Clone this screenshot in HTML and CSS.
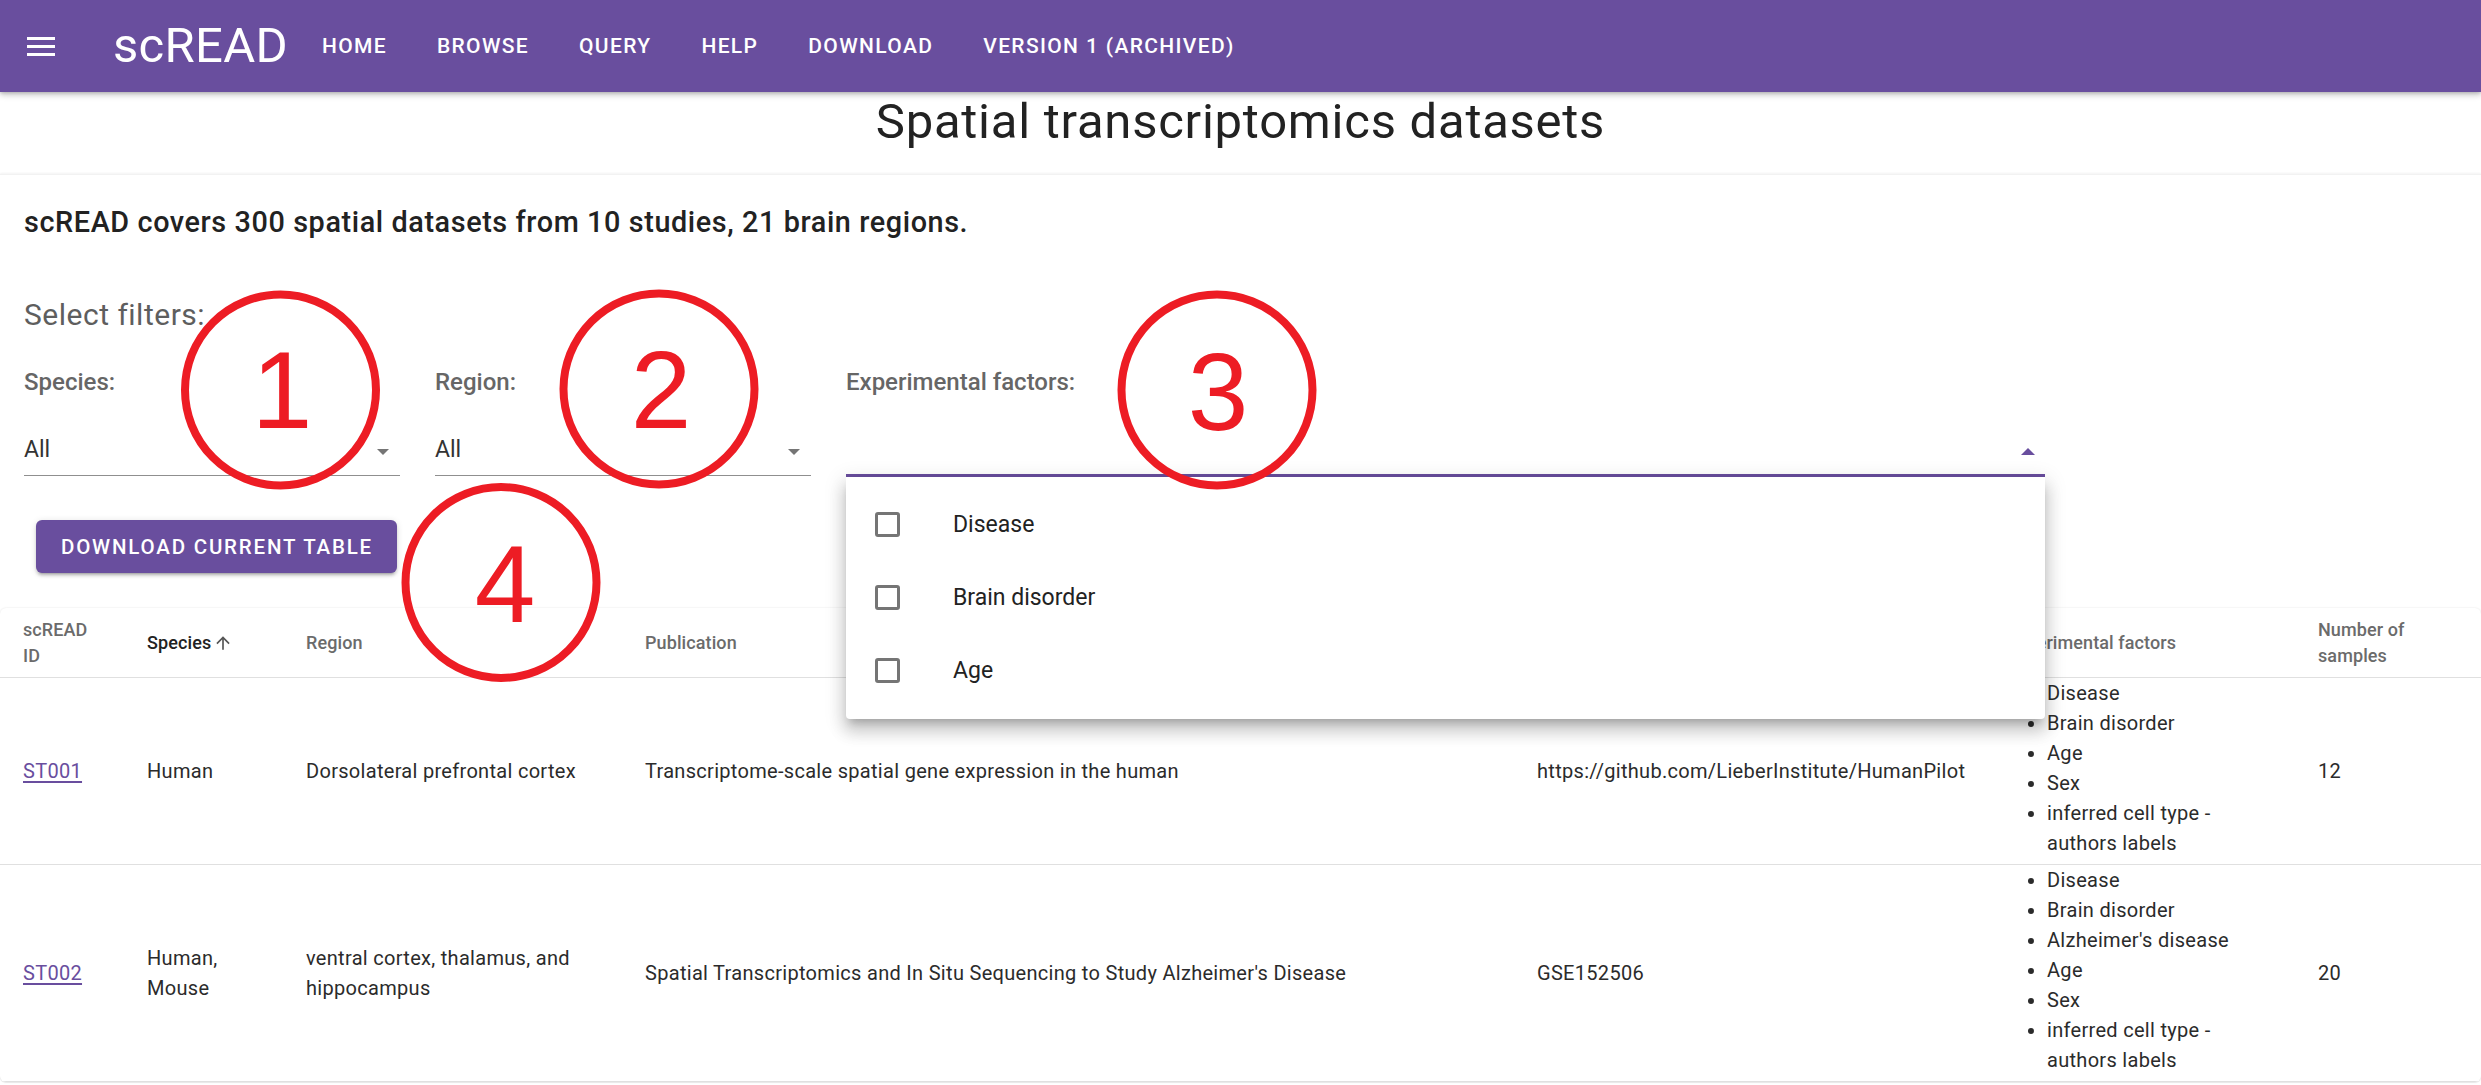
FILE: index.html
```html
<!DOCTYPE html>
<html lang="en">
<head>
<meta charset="utf-8">
<title>scREAD - Spatial transcriptomics datasets</title>
<link rel="stylesheet" href="styles.css">
</head>
<body>
<header class="appbar">
  <div class="menu-icon"><span></span><span></span><span></span></div>
  <div class="logo">scREAD</div>
  <nav class="nav">
    <a class="nav-link">HOME</a>
    <a class="nav-link">BROWSE</a>
    <a class="nav-link">QUERY</a>
    <a class="nav-link">HELP</a>
    <a class="nav-link">DOWNLOAD</a>
    <a class="nav-link">VERSION 1 (ARCHIVED)</a>
  </nav>
</header>

<div class="title-bar">
  <h1 class="page-title">Spatial transcriptomics datasets</h1>
</div>

<main class="sheet">
  <p class="summary">scREAD covers 300 spatial datasets from 10 studies, 21 brain regions.</p>
  <p class="filters-title">Select filters:</p>

  <div class="filters">
    <div class="field field-small">
      <div class="field-label">Species:</div>
      <div class="select">
        <span class="select-value">All</span>
        <span class="caret"></span>
      </div>
    </div>
    <div class="field field-small">
      <div class="field-label">Region:</div>
      <div class="select">
        <span class="select-value">All</span>
        <span class="caret"></span>
      </div>
    </div>
    <div class="field field-wide">
      <div class="field-label">Experimental factors:</div>
      <div class="select select-focused">
        <span class="select-value"></span>
        <span class="caret caret-up"></span>
        <ul class="menu">
          <li class="menu-item"><span class="checkbox"></span><span class="menu-text">Disease</span></li>
          <li class="menu-item"><span class="checkbox"></span><span class="menu-text">Brain disorder</span></li>
          <li class="menu-item"><span class="checkbox"></span><span class="menu-text">Age</span></li>
        </ul>
      </div>
    </div>
  </div>

  <button class="download">DOWNLOAD CURRENT TABLE</button>

  <div class="table-paper">
    <table class="data-table">
      <colgroup>
        <col class="c-id"><col class="c-species"><col class="c-region"><col class="c-pub"><col class="c-code"><col class="c-factors"><col class="c-num">
      </colgroup>
      <thead>
        <tr>
          <th>scREAD ID</th>
          <th class="sorted">Species<svg class="sort-icon" viewBox="0 0 24 24" width="20" height="20"><path d="M4 12l1.41 1.41L11 7.83V20h2V7.83l5.58 5.59L20 12l-8-8-8 8z"/></svg></th>
          <th>Region</th>
          <th>Publication</th>
          <th>Data availability</th>
          <th>Experimental factors</th>
          <th>Number of samples</th>
        </tr>
      </thead>
      <tbody>
        <tr>
          <td><a class="id-link">ST001</a></td>
          <td>Human</td>
          <td>Dorsolateral prefrontal cortex</td>
          <td>Transcriptome-scale spatial gene expression in the human</td>
          <td>https://github.com/LieberInstitute/HumanPilot</td>
          <td class="factors">
            <ul>
              <li>Disease</li>
              <li>Brain disorder</li>
              <li>Age</li>
              <li>Sex</li>
              <li>inferred cell type - authors labels</li>
            </ul>
          </td>
          <td>12</td>
        </tr>
        <tr>
          <td><a class="id-link">ST002</a></td>
          <td>Human, Mouse</td>
          <td>ventral cortex, thalamus, and hippocampus</td>
          <td>Spatial Transcriptomics and In Situ Sequencing to Study Alzheimer's Disease</td>
          <td>GSE152506</td>
          <td class="factors">
            <ul>
              <li>Disease</li>
              <li>Brain disorder</li>
              <li>Alzheimer's disease</li>
              <li>Age</li>
              <li>Sex</li>
              <li>inferred cell type - authors labels</li>
            </ul>
          </td>
          <td>20</td>
        </tr>
      </tbody>
    </table>
  </div>
</main>

<svg class="annotations" width="2481" height="1085" viewBox="0 0 2481 1085">
  <g class="ring">
    <circle cx="280.5" cy="390" r="95.5"/>
    <circle cx="659" cy="389" r="95.5"/>
    <circle cx="1217" cy="390" r="95.5"/>
    <circle cx="501" cy="582.5" r="95.5"/>
  </g>
  <g class="num">
    <text x="282" y="428">1</text>
    <text x="661" y="428">2</text>
    <text x="1218" y="430">3</text>
    <text x="505" y="622">4</text>
  </g>
</svg>
</body>
</html>
```

FILE: styles.css
```css
html, body {
  margin: 0;
  padding: 0;
}

body {
  position: relative;
  width: 2481px;
  height: 1085px;
  overflow: hidden;
  background: #ffffff;
  font-family: Roboto, "Noto Sans", "Liberation Sans", Arial, sans-serif;
  color: rgba(0, 0, 0, 0.87);
}

/* ---------- App bar ---------- */
.appbar {
  position: relative;
  z-index: 2;
  display: flex;
  align-items: center;
  height: 92px;
  background: #694e9e;
  color: #ffffff;
  box-shadow: 0 3px 6px rgba(0, 0, 0, 0.22), 0 1px 3px rgba(0, 0, 0, 0.14);
}

.menu-icon {
  display: flex;
  flex-direction: column;
  justify-content: space-between;
  width: 28px;
  height: 19px;
  margin-left: 27px;
}

.menu-icon span {
  display: block;
  height: 3px;
  background: #ffffff;
}

.logo {
  margin-left: 58px;
  font-size: 49px;
  font-weight: 400;
  line-height: 60px;
  letter-spacing: 0.3px;
}

.nav {
  display: flex;
  gap: 50px;
  margin-left: 34px;
}

.nav-link {
  font-size: 21px;
  font-weight: 500;
  letter-spacing: 1.35px;
  line-height: 30px;
  color: #ffffff;
}

/* ---------- Title ---------- */
.title-bar {
  padding-bottom: 23px;
}

.page-title {
  margin: 0;
  text-align: center;
  font-size: 49px;
  font-weight: 400;
  line-height: 59px;
  letter-spacing: 0.75px;
  color: #222222;
}

/* ---------- Sheet ---------- */
.sheet {
  position: relative;
  height: 911px;
  box-sizing: border-box;
  overflow: hidden;
  padding: 28px 0 0 24px;
  border-top: 1px solid #f2f2f2;
  box-shadow: 0 -1px 2px rgba(0, 0, 0, 0.05);
}

.summary {
  margin: -1px 0 0;
  font-size: 28.8px;
  font-weight: 500;
  line-height: 40px;
  letter-spacing: 0.6px;
  color: #222222;
}

.filters-title {
  margin: 53px 0 0;
  font-size: 30px;
  font-weight: 400;
  line-height: 40px;
  letter-spacing: 0.5px;
  color: #5e5e5e;
}

.filters {
  display: flex;
  gap: 35px;
  margin-top: 32px;
}

.field-small {
  width: 376px;
}

.field-wide {
  width: 1199px;
}

.field-label {
  font-size: 24px;
  font-weight: 500;
  line-height: 30px;
  color: #666666;
}

.select {
  position: relative;
  display: flex;
  align-items: flex-start;
  margin-top: 38px;
  height: 41px;
  box-sizing: border-box;
  border-bottom: 1px solid #8f8f8f;
}

.select-focused {
  height: 42px;
  border-bottom: 3px solid #694e9e;
}

.select-value {
  flex: 1;
  font-size: 23px;
  line-height: 30px;
  color: #333333;
}

.caret {
  width: 0;
  height: 0;
  margin-top: 14px;
  margin-right: 11px;
  border-left: 6px solid transparent;
  border-right: 6px solid transparent;
  border-top: 6px solid #757575;
}

.caret-up {
  margin-top: 13px;
  margin-right: 10px;
  border-left-width: 7px;
  border-right-width: 7px;
  border-top: 0;
  border-bottom: 7px solid #694e9e;
}

/* ---------- Dropdown menu ---------- */
.menu {
  position: absolute;
  z-index: 5;
  top: 100%;
  left: 0;
  right: 0;
  margin: 3px 0 0;
  padding: 11px 0 12px;
  list-style: none;
  background: #ffffff;
  border-radius: 0 0 4px 4px;
  box-shadow: 0 7px 8px -4px rgba(0, 0, 0, 0.2), 0 12px 16px 2px rgba(0, 0, 0, 0.14), 0 5px 20px 4px rgba(0, 0, 0, 0.1);
}

.menu-item {
  display: flex;
  align-items: center;
  height: 73px;
  padding-left: 29px;
}

.checkbox {
  width: 25px;
  height: 25px;
  box-sizing: border-box;
  border: 3px solid #757575;
  border-radius: 3px;
}

.menu-text {
  margin-left: 53px;
  font-size: 23px;
  line-height: 30px;
  color: #222222;
}

/* ---------- Button ---------- */
.download {
  display: block;
  margin: 43px 0 0 12px;
  height: 53px;
  padding: 0 24px 0 25px;
  border: 0;
  border-radius: 6px;
  background: #694e9e;
  color: #ffffff;
  font-family: Roboto, "Noto Sans", sans-serif;
  font-size: 20.5px;
  font-weight: 500;
  letter-spacing: 1.8px;
  box-shadow: 0 4px 2px -3px rgba(0, 0, 0, 0.2), 0 3px 3px 0 rgba(0, 0, 0, 0.14), 0 1px 7px 0 rgba(0, 0, 0, 0.12);
}

/* ---------- Table ---------- */
.table-paper {
  margin: 35px 0 0 -24px;
  width: 2481px;
  border-radius: 6px;
  box-shadow: 0 0 2px rgba(0, 0, 0, 0.12), 0 1px 1px rgba(0, 0, 0, 0.06);
  overflow: hidden;
}

.data-table {
  width: 2481px;
  table-layout: fixed;
  border-collapse: collapse;
}

.c-id { width: 124px; }
.c-species { width: 159px; }
.c-region { width: 339px; }
.c-pub { width: 892px; }
.c-code { width: 470px; }
.c-factors { width: 311px; }
.c-num { width: 186px; }

.data-table th {
  height: 69px;
  padding: 0 23px;
  text-align: left;
  vertical-align: middle;
  font-size: 18px;
  font-weight: 500;
  line-height: 26px;
  letter-spacing: 0.1px;
  color: #6b6b6b;
  border-bottom: 1px solid #e0e0e0;
}

.data-table th.sorted {
  color: #222222;
}

.sort-icon {
  vertical-align: -4px;
  margin-left: 2px;
  fill: #555555;
}

.data-table td {
  padding: 0 23px;
  vertical-align: middle;
  font-size: 20px;
  line-height: 30px;
  letter-spacing: 0.3px;
  color: #2b2b2b;
  border-bottom: 1px solid #e0e0e0;
}

.data-table td.factors {
  vertical-align: top;
  padding-bottom: 6px;
}

.factors ul {
  margin: 0;
  padding-left: 40px;
}

.id-link {
  color: #694e9e;
  text-decoration: underline;
  text-underline-offset: 3px;
}

/* ---------- Annotation overlay ---------- */
.annotations {
  position: absolute;
  top: 0;
  left: 0;
  z-index: 10;
  pointer-events: none;
}

.ring circle {
  fill: none;
  stroke: #ed1c24;
  stroke-width: 8;
}

.num text {
  fill: #ed1c24;
  font-family: "Liberation Sans", Arial, sans-serif;
  font-size: 109px;
  text-anchor: middle;
}
```
